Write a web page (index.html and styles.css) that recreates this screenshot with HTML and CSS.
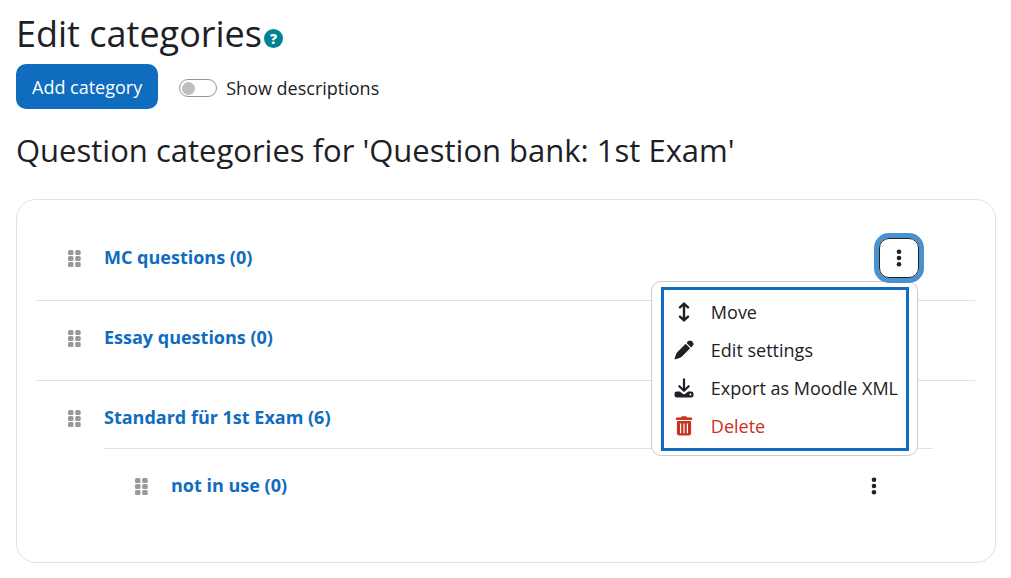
FILE: index.html
```html
<!DOCTYPE html>
<html lang="en">
<head>
    <meta charset="UTF-8">
    <meta name="viewport" content="width=device-width, initial-scale=1.0">
    <title>Edit categories</title>
    <link rel="stylesheet" href="styles.css">
</head>
<body>
    <!-- shared icons -->
    <svg class="icon-defs" width="0" height="0" aria-hidden="true">
        <symbol id="icon-grip" viewBox="0 0 13 17">
            <rect x="0" y="0" width="5.500" height="5" rx="1.500"/>
            <rect x="7.200" y="0" width="5.500" height="5" rx="1.500"/>
            <rect x="0" y="6" width="5.500" height="5" rx="1.500"/>
            <rect x="7.200" y="6" width="5.500" height="5" rx="1.500"/>
            <rect x="0" y="12" width="5.500" height="5" rx="1.500"/>
            <rect x="7.200" y="12" width="5.500" height="5" rx="1.500"/>
        </symbol>
        <symbol id="icon-dots" viewBox="0 0 6 18">
            <circle cx="3" cy="2.8" r="2.3"/>
            <circle cx="3" cy="9" r="2.3"/>
            <circle cx="3" cy="15.2" r="2.3"/>
        </symbol>
    </svg>

    <header class="page-header">
        <h1>Edit categories</h1>
        <button type="button" class="help-btn" aria-label="Help with Edit categories">?</button>
    </header>

    <div class="toolbar">
        <button type="button" class="add-btn">Add category</button>
        <div class="switch">
            <input type="checkbox" role="switch" id="showDescriptions">
            <label for="showDescriptions">Show descriptions</label>
        </div>
    </div>

    <h2>Question categories for 'Question bank: 1st Exam'</h2>

    <div class="card">
        <ul class="category-list">
            <li>
                <div class="category-row">
                    <button type="button" class="grip" aria-label="Move MC questions"><svg><use href="#icon-grip"/></svg></button>
                    <a href="#">MC questions (0)</a>
                    <div class="actions">
                        <button type="button" class="menu-btn active" aria-label="Actions" aria-expanded="true"><svg><use href="#icon-dots"/></svg></button>
                        <div class="menu">
                            <ul>
                                <li><a href="#">
                                    <svg viewBox="0 0 20 20" fill="none" stroke="currentColor" stroke-width="2.4" stroke-linecap="round" stroke-linejoin="round"><path d="M10 2v16M6 5.4 10 1.6l4 3.8M6 14.6l4 3.8 4-3.8"/></svg>
                                    Move
                                </a></li>
                                <li><a href="#">
                                    <svg viewBox="0 0 20 20" fill="currentColor"><path d="M14.2 1.3a2.6 2.6 0 0 1 3.6 0l.9.9a2.6 2.6 0 0 1 0 3.6l-1.600 1.600-4.500-4.500z"/><path d="M11.700 3.800l4.500 4.500-8.500 8.500a4 4 0 0 1-1.600 1L1.500 19.300a.7.7 0 0 1-.9-.9L2.200 13.900a4 4 0 0 1 1-1.600z"/></svg>
                                    Edit settings
                                </a></li>
                                <li><a href="#">
                                    <svg viewBox="0 0 20 20" fill="currentColor"><path fill="none" stroke="currentColor" stroke-width="2.2" stroke-linecap="round" stroke-linejoin="round" d="M10 1.300v11M5.300 8.200 10 12.700l4.700-4.500"/><path fill-rule="evenodd" d="M2.800 13.500h3L8.400 15.500a2.400 2.400 0 0 0 3.200 0L14.200 13.500h3a2.300 2.300 0 0 1 2.300 2.300v1.500a2.300 2.300 0 0 1-2.300 2.300H2.800A2.300 2.300 0 0 1 .5 17.300v-1.500A2.300 2.300 0 0 1 2.800 13.500zM16.400 15.600a1 1 0 1 0 0 2 1 1 0 0 0 0-2z"/></svg>
                                    Export as Moodle XML
                                </a></li>
                                <li><a href="#" class="delete">
                                    <svg viewBox="0 0 20 20" fill="currentColor"><path d="M7.200.9A1.200 1.200 0 0 1 8.300.3h3.400a1.200 1.200 0 0 1 1.100.6l.3.600h4a1.200 1.200 0 0 1 0 2.400H2.900a1.200 1.200 0 0 1 0-2.400h4z"/><path fill-rule="evenodd" d="M2.900 5h14.200v12.200a2.400 2.400 0 0 1-2.400 2.400H5.300a2.400 2.400 0 0 1-2.400-2.400zM6 7.400v9.800h1.200V7.400zM9.400 7.400v9.800h1.200V7.400zM12.800 7.400v9.800H14V7.400z"/></svg>
                                    Delete
                                </a></li>
                            </ul>
                        </div>
                    </div>
                </div>
            </li>
            <li>
                <div class="category-row">
                    <button type="button" class="grip" aria-label="Move Essay questions"><svg><use href="#icon-grip"/></svg></button>
                    <a href="#">Essay questions (0)</a>
                    <div class="actions">
                        <button type="button" class="menu-btn" aria-label="Actions"><svg><use href="#icon-dots"/></svg></button>
                    </div>
                </div>
            </li>
            <li>
                <div class="category-row">
                    <button type="button" class="grip" aria-label="Move Standard für 1st Exam"><svg><use href="#icon-grip"/></svg></button>
                    <a href="#">Standard für 1st Exam (6)</a>
                    <div class="actions">
                        <button type="button" class="menu-btn" aria-label="Actions"><svg><use href="#icon-dots"/></svg></button>
                    </div>
                </div>
                <ul class="category-list nested">
                    <li>
                        <div class="category-row">
                            <button type="button" class="grip" aria-label="Move not in use"><svg><use href="#icon-grip"/></svg></button>
                            <a href="#">not in use (0)</a>
                            <div class="actions">
                                <button type="button" class="menu-btn" aria-label="Actions"><svg><use href="#icon-dots"/></svg></button>
                            </div>
                        </div>
                    </li>
                </ul>
            </li>
        </ul>
    </div>
</body>
</html>
```

FILE: styles.css
```css
* {
    box-sizing: border-box;
}
body {
    font-family: "Open Sans", "Noto Sans", sans-serif;
    font-size: 18px;
    line-height: 28px;
    margin: 0;
    padding: 12px 15px 15px 16px;
    background-color: #fff;
    color: #1d2125;
}
button {
    font: inherit;
    color: inherit;
    border: none;
    padding: 0;
    background: none;
    cursor: pointer;
}
a {
    color: #0f6cbf;
    text-decoration: none;
}
ul {
    list-style: none;
    margin: 0;
    padding: 0;
}
h1, h2 {
    margin: 0;
    font-weight: 400;
}
h1 {
    font-size: 36px;
    line-height: 44px;
}
h2 {
    font-size: 31px;
    line-height: 40px;
    margin: 21px 0 29px;
}
.icon-defs {
    position: absolute;
}
.page-header {
    display: flex;
    align-items: center;
    gap: 2px;
    margin-bottom: 8px;
}
.help-btn {
    width: 19px;
    height: 19px;
    margin-top: 8px;
    border-radius: 50%;
    background: #008196;
    color: #fff;
    font-size: 14px;
    font-weight: 800;
    line-height: 19px;
}
.toolbar {
    display: flex;
    align-items: center;
    gap: 21px;
}
.add-btn {
    height: 45px;
    padding: 0 16px;
    border-radius: 10px;
    background: #0f6cbf;
    color: #fff;
}
.switch {
    display: flex;
    align-items: center;
    gap: 9px;
    padding-top: 3px;
}
.switch input {
    appearance: none;
    display: flex;
    align-items: center;
    width: 38px;
    height: 18px;
    margin: 0;
    padding: 0 2px;
    border: 1px solid #8f959e;
    border-radius: 9px;
}
.switch input::before {
    content: "";
    width: 13px;
    height: 13px;
    border-radius: 50%;
    background: #bfbfbf;
}
.switch input:checked::before {
    margin-left: auto;
    background: #0f6cbf;
}
.card {
    border: 1px solid #dee2e6;
    border-radius: 20px;
    padding: 21px 20px 34px;
}
.category-list > li {
    padding-bottom: 22px;
    border-bottom: 1px solid #dee2e6;
}
.category-list > li:last-child {
    padding-bottom: 0;
    border-bottom: none;
}
.category-row {
    display: flex;
    align-items: center;
    padding: 17px 56px 0 31px;
}
.category-row > a {
    flex: 1;
    font-weight: 700;
    padding-bottom: 2px;
}
.grip {
    display: flex;
    margin-right: 23px;
    cursor: move;
}
.grip svg {
    width: 13px;
    height: 17px;
    fill: #999;
}
.nested {
    margin: 10px 42px 0 67px;
    padding-bottom: 22px;
    border-top: 1px solid #dee2e6;
}
.nested .category-row {
    padding-right: 39px;
}
.actions {
    position: relative;
}
.menu-btn {
    display: flex;
    align-items: center;
    justify-content: center;
    width: 40px;
    height: 40px;
    border: 1px solid transparent;
    border-radius: 10px;
}
.menu-btn svg {
    width: 6px;
    height: 18px;
    fill: currentColor;
}
.menu-btn.active {
    position: relative;
    z-index: 2;
    border-color: #1d2125;
    box-shadow: 0 0 0 5px #4b91cf;
}
.menu {
    position: absolute;
    top: 43px;
    right: 1px;
    z-index: 1;
    padding: 5px 8px 4px 9px;
    background: #fff;
    border: 1px solid #ccc;
    border-radius: 10px;
}
.menu ul {
    padding: 3px 0;
    border: 3px solid #0f6cbf;
}
.menu a {
    display: flex;
    align-items: center;
    gap: 17px;
    height: 38px;
    padding: 0 8px 0 10px;
    color: #1d2125;
    white-space: nowrap;
}
.menu a.delete {
    color: #ca3120;
}
.menu svg {
    width: 20px;
    height: 20px;
}
```
